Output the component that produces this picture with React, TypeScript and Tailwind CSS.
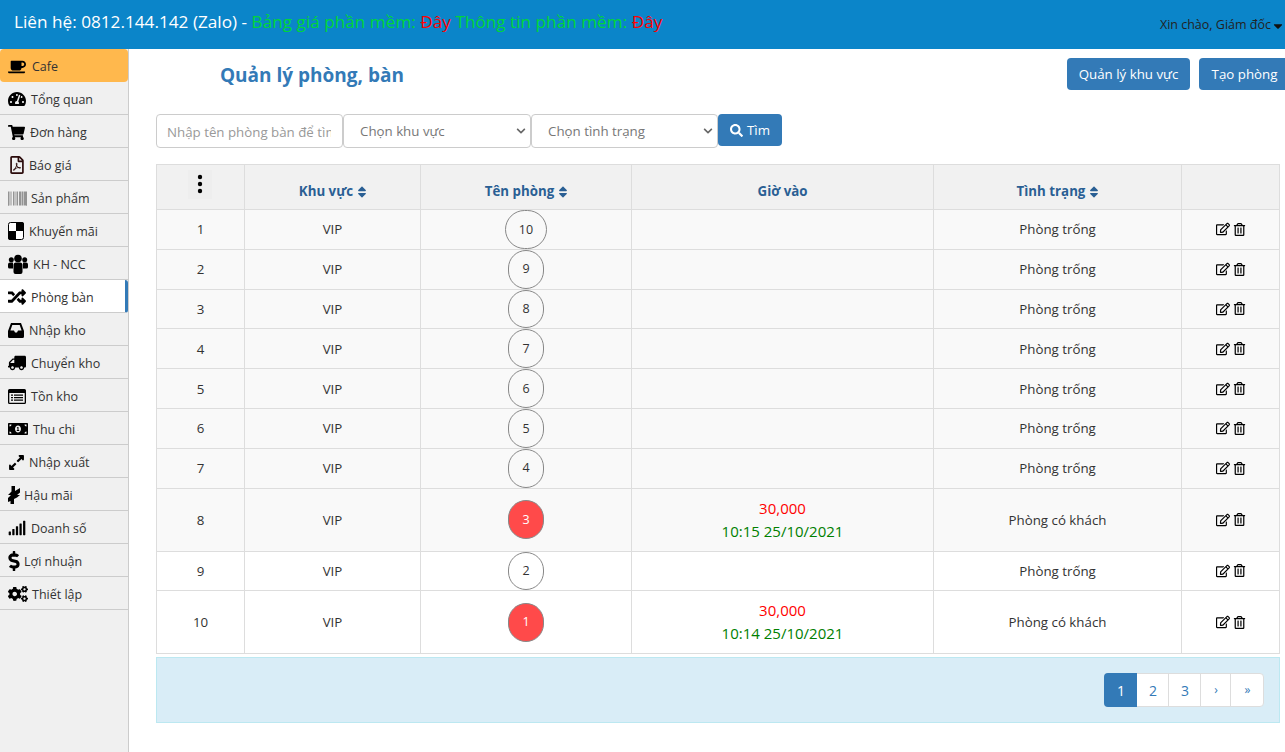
import React from 'react';
import {
  FaCoffee, FaTachometerAlt, FaShoppingCart, FaRegFilePdf, FaBarcode, FaRandom,
  FaTruck, FaMoneyBillAlt, FaExpandAlt, FaSignal, FaDollarSign, FaCogs, FaRegEdit,
  FaRegTrashAlt, FaSearch, FaSort, FaCaretDown, FaChevronDown,
} from 'react-icons/fa';

const Checker = () => (
  <svg width="16" height="18" viewBox="0 0 16 18">
    <rect x="0.5" y="0.5" width="15" height="17" rx="2" fill="#fff" stroke="#000" />
    <path d="M8 0h6a2 2 0 0 1 2 2v7H8zM0 9h8v9H2a2 2 0 0 1-2-2z" fill="#000" />
  </svg>
);

const Flash = () => (
  <svg width="12" height="18" viewBox="0 0 12 18">
    <path d="M3.5 0H7v5l5-3v4.500L9 9h3l-3 2.500-3 1.500v5H2.500v-3L0 16v-4l3-3H0l3.500-3.500z" fill="#000" />
  </svg>
);

const Users = () => (
  <svg width="20" height="20" viewBox="0 0 20 20">
    <circle cx="10" cy="4.500" r="3.800" fill="#000" />
    <circle cx="3.300" cy="5.800" r="2.500" fill="#000" />
    <circle cx="16.700" cy="5.800" r="2.500" fill="#000" />
    <path d="M0 10.500a2 2 0 0 1 2-2h3v6H1.500A1.500 1.500 0 0 1 0 13zM15 8.500h3a2 2 0 0 1 2 2V13a1.500 1.500 0 0 1-1.500 1.500H15z" fill="#000" />
    <path d="M5.500 11a2.500 2.500 0 0 1 2.500-2.500h4a2.500 2.500 0 0 1 2.500 2.500v7a2 2 0 0 1-2 2h-5a2 2 0 0 1-2-2z" fill="#000" />
  </svg>
);

const Inbox = () => (
  <svg width="16" height="16" viewBox="0 0 16 16">
    <path
      fillRule="evenodd"
      d="M3 1h10l3 8v5.500a1.500 1.500 0 0 1-1.500 1.500h-13A1.500 1.500 0 0 1 0 14.500V9zM4.300 3L2.400 8.500H6L7 10.500h2L10 8.500h3.600L11.700 3z"
      fill="#000"
    />
  </svg>
);

const ListBox = () => (
  <svg width="18" height="15" viewBox="0 0 18 15">
    <path
      fillRule="evenodd"
      d="M1.500 0h15A1.500 1.500 0 0 1 18 1.500v12a1.500 1.500 0 0 1-1.500 1.500h-15A1.500 1.500 0 0 1 0 13.500v-12A1.500 1.500 0 0 1 1.500 0zM1.300 4v9.500a.2.200 0 0 0 .2.200h15a.2.200 0 0 0 .2-.2V4z"
      fill="#000"
    />
    <path d="M3 5.500h2v1.300H3zM6 5.500h9v1.300H6zM3 8h2v1.300H3zM6 8h9v1.300H6zM3 10.500h2v1.300H3zM6 10.500h9v1.300H6z" fill="#000" />
  </svg>
);

const Dots = () => (
  <svg width="6" height="20" viewBox="0 0 6 20">
    <circle cx="3" cy="3" r="2.200" fill="#000" />
    <circle cx="3" cy="10" r="2.200" fill="#000" />
    <circle cx="3" cy="17" r="2.200" fill="#000" />
  </svg>
);

// box is the width from the left padding to where the label starts
const menu: { label: string; icon: React.ReactNode; box: string }[] = [
  { label: 'Tổng quan', icon: <FaTachometerAlt size={18} />, box: 'w-[23px]' },
  { label: 'Đơn hàng', icon: <FaShoppingCart size={17} />, box: 'w-[22px]' },
  { label: 'Báo giá', icon: <FaRegFilePdf size={18} className="text-[#2a0a0a]" />, box: 'w-[21px]' },
  { label: 'Sản phẩm', icon: <FaBarcode size={19} className="text-[#666]" />, box: 'w-[23px]' },
  { label: 'Khuyến mãi', icon: <Checker />, box: 'w-[21px]' },
  { label: 'KH - NCC', icon: <Users />, box: 'w-[25px]' },
  { label: 'Phòng bàn', icon: <FaRandom size={18} />, box: 'w-[23px]' },
  { label: 'Nhập kho', icon: <Inbox />, box: 'w-[21px]' },
  { label: 'Chuyển kho', icon: <FaTruck size={18} className="-scale-x-100" />, box: 'w-[23px]' },
  { label: 'Tồn kho', icon: <ListBox />, box: 'w-[23px]' },
  { label: 'Thu chi', icon: <FaMoneyBillAlt size={20} />, box: 'w-[25px]' },
  { label: 'Nhập xuất', icon: <FaExpandAlt size={17} />, box: 'w-[21px]' },
  { label: 'Hậu mãi', icon: <Flash />, box: 'w-[16px]' },
  { label: 'Doanh số', icon: <FaSignal size={18} />, box: 'w-[23px]' },
  { label: 'Lợi nhuận', icon: <FaDollarSign size={20} className="-ml-[4px]" />, box: 'w-[16px]' },
  { label: 'Thiết lập', icon: <FaCogs size={20} />, box: 'w-[24px]' },
];

const rows = [
  { no: 1, room: '10' },
  { no: 2, room: '9' },
  { no: 3, room: '8' },
  { no: 4, room: '7' },
  { no: 5, room: '6' },
  { no: 6, room: '5' },
  { no: 7, room: '4' },
  { no: 8, room: '3', time: '10:15 25/10/2021' },
  { no: 9, room: '2' },
  { no: 10, room: '1', time: '10:14 25/10/2021' },
];

const SortHead = ({ label }: { label: string }) => (
  <th className="border border-[#ddd] align-middle pt-[10px] pl-[3px] text-center font-bold text-[#2a5f94]">
    <span className="inline-flex items-center gap-[2px]">
      {label}
      <FaSort size={14} />
    </span>
  </th>
);

const Select = ({ label, width }: { label: string; width: string }) => (
  <div className={`${width} relative shrink-0`}>
    <select defaultValue="" className="w-full h-[34px] appearance-none border border-[#ccc] rounded-[4px] bg-white pl-[16px] pt-[2px] text-[#777]">
      <option value="">{label}</option>
    </select>
    <FaChevronDown size={10} className="absolute right-[5px] top-[12px] text-[#666] pointer-events-none" />
  </div>
);

export default function App() {
  return (
    <div className="h-screen overflow-hidden bg-white text-[13.3px] text-[#333] font-['Open_Sans',sans-serif]">
      <header className="h-[49px] bg-[#0b85c9] flex justify-between pl-[14px]">
        <div className="pt-[10px] text-[17.2px] leading-[24px] text-white">
          Liên hệ: 0812.144.142 (Zalo) - <span className="text-[#00d639]">Bảng giá phần mềm:</span>{' '}
          <span className="text-[#ff0000]">Đây</span>{' '}
          <span className="text-[#00d639]">Thông tin phần mềm:</span>{' '}
          <span className="text-[#ff0000]">Đây</span>
        </div>
        <div className="pt-[15px] text-[12.500px] leading-[20px] text-[#222] flex items-start">
          Xin chào, Giám đốc
          <FaCaretDown size={14} className="mt-[4px] text-[#111]" />
        </div>
      </header>

      <div className="flex h-[703px]">
        <aside className="w-[129px] shrink-0 bg-[#f0f0f0] border-r border-[#ccc] text-[12.500px]">
          <div className="h-[33px] bg-[#ffb84d] rounded-[4px] flex items-center pt-[2px] pl-[8px]">
            <span className="w-[24px] text-black flex items-center">
              <FaCoffee size={18} />
            </span>
            <span className="mt-[2px]">Cafe</span>
          </div>
          {menu.map((m) => {
            const active = m.label === 'Phòng bàn';
            return (
              <div
                key={m.label}
                className={`h-[33px] flex items-center pt-[2px] pl-[8px] border-b border-[#ccc] ${active ? 'bg-white border-r-[3px] border-r-[#337ab7] rounded-r-[3px]' : ''}`}
              >
                <span className={`${m.box} shrink-0 text-black flex items-center`}>{m.icon}</span>
                <span className="mt-[2px]">{m.label}</span>
              </div>
            );
          })}
        </aside>

        <main className="flex-1 min-w-0 pl-[27px] pr-[5px] overflow-hidden">
          <div className="flex justify-between items-start pt-[9px]">
            <h1 className="ml-[64px] mt-[2px] text-[19px] leading-[30px] font-bold text-[#337ab7]">Quản lý phòng, bàn</h1>
            <div className="flex gap-[9px] -mr-[5px] w-[218px] shrink-0">
              <button className="h-[32px] w-[123px] pt-[1px] rounded-[4px] bg-[#337ab7] text-white whitespace-nowrap shrink-0">Quản lý khu vực</button>
              <button className="h-[32px] w-[91px] pt-[1px] rounded-[4px] bg-[#337ab7] text-white whitespace-nowrap shrink-0">Tạo phòng</button>
            </div>
          </div>

          <div className="flex items-start mt-[24px]">
            <input
              placeholder="Nhập tên phòng bàn để tìm kiếm"
              className="w-[187px] h-[34px] border border-[#ccc] rounded-[4px] pl-[10px] pr-[11px] pt-[2px] placeholder:text-[#999] shrink-0"
            />
            <Select label="Chọn khu vực" width="w-[188px]" />
            <Select label="Chọn tình trạng" width="w-[187px]" />
            <button className="h-[32px] w-[64px] pt-[1px] rounded-[4px] bg-[#337ab7] text-white flex items-center justify-center gap-[4px]">
              <FaSearch size={13} />
              Tìm
            </button>
          </div>

          <table className="mt-[16px] w-[1123px] table-fixed border-collapse">
            <colgroup>
              <col className="w-[88px]" />
              <col className="w-[176px]" />
              <col className="w-[211px]" />
              <col className="w-[302px]" />
              <col className="w-[248px]" />
              <col className="w-[98px]" />
            </colgroup>
            <thead>
              <tr className="h-[45px] bg-[#f1f1f1]">
                <th className="border border-[#ddd] align-middle">
                  <span className="ml-[31px] w-[24px] h-[29px] bg-[#eee] flex items-center justify-center -mt-[6px]">
                    <Dots />
                  </span>
                </th>
                <SortHead label="Khu vực" />
                <SortHead label="Tên phòng" />
                <th className="border border-[#ddd] align-middle pt-[10px] text-center font-bold text-[#2a5f94]">Giờ vào</th>
                <SortHead label="Tình trạng" />
                <th className="border border-[#ddd]" />
              </tr>
            </thead>
            <tbody>
              {rows.map((r, i) => (
                <tr key={r.no} className={i < 8 ? 'bg-[#f9f9f9]' : 'bg-white'}>
                  <td className="border border-[#ddd] pt-[2px] text-center">{r.no}</td>
                  <td className="border border-[#ddd] pt-[2px] text-center">VIP</td>
                  <td className="border border-[#ddd] p-0 text-center">
                    <span
                      className={`inline-flex h-[38.8px] align-middle items-center justify-center px-[13px] pt-[1px] rounded-[20px] border border-[#888] text-[12.500px] ${r.time ? 'bg-[#ff4a4a] text-white' : 'text-[#333]'}`}
                    >
                      {r.room}
                    </span>
                  </td>
                  <td className="border border-[#ddd] text-center">
                    {r.time && (
                      <div className="py-[8px] leading-[23px] text-[15px]">
                        <div className="text-[#ff0000]">30,000</div>
                        <div className="text-[#008000]">{r.time}</div>
                      </div>
                    )}
                  </td>
                  <td className="border border-[#ddd] pt-[2px] text-center">{r.time ? 'Phòng có khách' : 'Phòng trống'}</td>
                  <td className="border border-[#ddd]">
                    <div className="flex items-center justify-center gap-[3px] text-black">
                      <FaRegEdit size={14} />
                      <FaRegTrashAlt size={13} />
                    </div>
                  </td>
                </tr>
              ))}
            </tbody>
          </table>

          <div className="mt-[3px] w-[1124px] h-[66px] bg-[#d9edf7] border border-[#bce8f1] flex justify-end items-start pt-[15px] pr-[15px]">
            <div className="flex h-[34px] bg-white rounded-[4px] border border-[#ddd] text-[#337ab7] text-[14px]">
              <span className="w-[33px] -my-px -ml-px pl-[1px] bg-[#337ab7] text-white rounded-l-[4px] flex items-center justify-center">1</span>
              <span className="w-[32px] pl-[1px] border-r border-[#ddd] flex items-center justify-center">2</span>
              <span className="w-[32px] pl-[1px] border-r border-[#ddd] flex items-center justify-center">3</span>
              <span className="w-[30px] pl-[1px] border-r border-[#ddd] flex items-center justify-center text-[12px]">›</span>
              <span className="w-[32px] pl-[1px] flex items-center justify-center text-[12px]">»</span>
            </div>
          </div>
        </main>
      </div>
    </div>
  );
}
